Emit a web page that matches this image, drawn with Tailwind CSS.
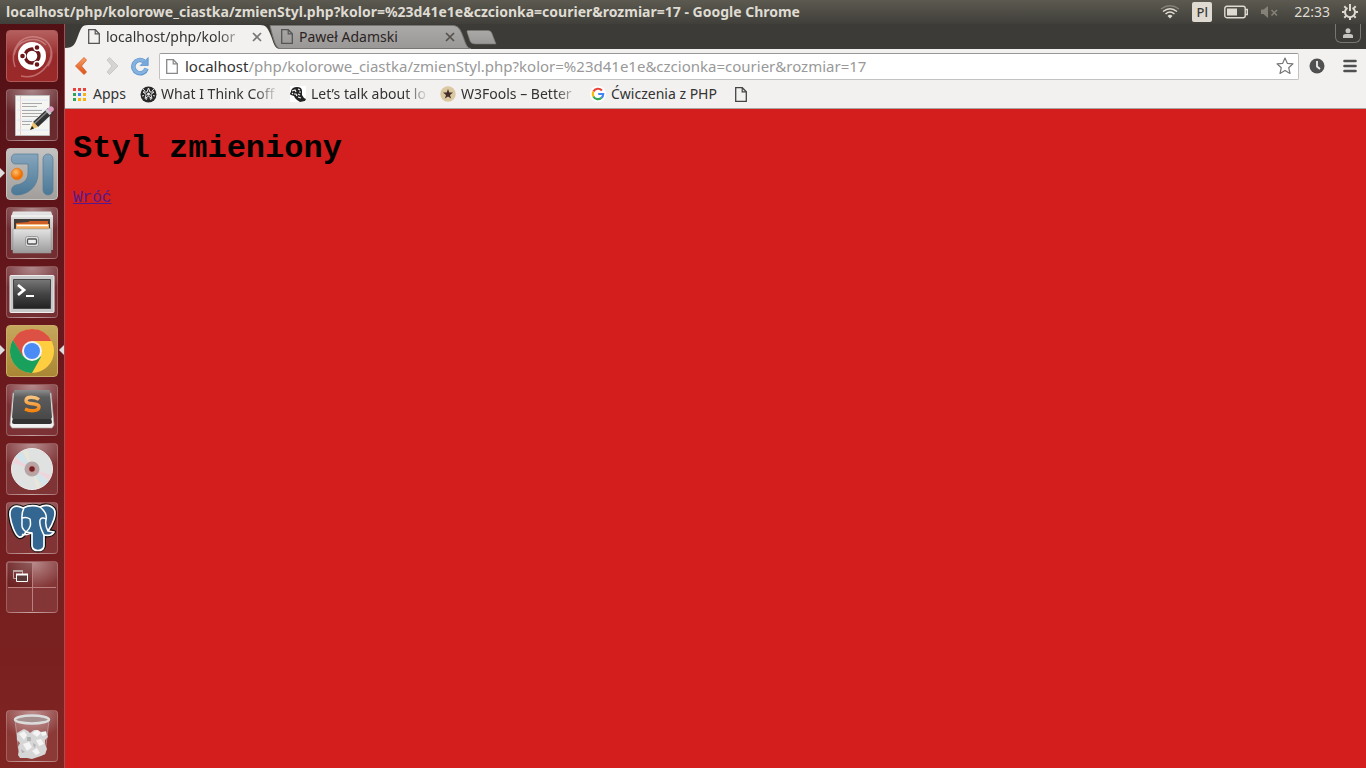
<!DOCTYPE html>
<html lang="pl">
<head>
<meta charset="utf-8">
<meta name="viewport" content="width=device-width, initial-scale=1">
<title>localhost/php/kolorowe_ciastka/zmienStyl.php</title>
<script src="https://cdn.jsdelivr.net/npm/@tailwindcss/browser@4"></script>
</head>
<body class="flex h-screen flex-col overflow-hidden bg-[#3c3b37] font-['Noto_Sans','Open_Sans',sans-serif] text-sm text-[#3a3a3a]">
<svg width="0" height="0" class="absolute" aria-hidden="true">
  <defs>
    <linearGradient id="metal" x1="0" y1="0" x2="0" y2="1"><stop offset="0" stop-color="#e6e6e6"/><stop offset="1" stop-color="#9a9a9a"/></linearGradient>
    <linearGradient id="blue" x1="0" y1="0" x2="0" y2="1"><stop offset="0" stop-color="#86a5bc"/><stop offset="1" stop-color="#4b7896"/></linearGradient>
    <linearGradient id="dark" x1="0" y1="0" x2="0" y2="1"><stop offset="0" stop-color="#777"/><stop offset=".5" stop-color="#444"/><stop offset="1" stop-color="#222"/></linearGradient>
    <linearGradient id="keycap" x1="0" y1="0" x2="0" y2="1"><stop offset="0" stop-color="#8d8d8d"/><stop offset=".25" stop-color="#5c5c5c"/><stop offset="1" stop-color="#484848"/></linearGradient>
    <linearGradient id="orange" x1="0" y1="0" x2="0" y2="1"><stop offset="0" stop-color="#f8c27e"/><stop offset="1" stop-color="#f58410"/></linearGradient>
    <radialGradient id="ball" cx=".4" cy=".35"><stop offset="0" stop-color="#ffc070"/><stop offset="1" stop-color="#f07000"/></radialGradient>
    <linearGradient id="back" x1="0" y1="0" x2="0" y2="1"><stop offset="0" stop-color="#f5a267"/><stop offset="1" stop-color="#dc4f17"/></linearGradient>
    <linearGradient id="tab" x1="0" y1="0" x2="0" y2="1"><stop offset="0" stop-color="#aaa9a7"/><stop offset="1" stop-color="#999896"/></linearGradient>
    <symbol id="page" viewBox="0 0 12 15"><path d="M.7.7h6.600l4 4v9.600H.7z" fill="none" stroke="currentColor" stroke-width="1.300"/><path d="M7.200.7v4.100h4.100" fill="none" stroke="currentColor" stroke-width="1.200"/></symbol>
  </defs>
</svg>

<header class="flex h-6 shrink-0 items-center bg-linear-to-b from-[#5c5a50] to-[#403f3a] pr-2 pl-1.5 text-[#dfdbd2]">
  <h1 class="flex-1 truncate text-[14px] leading-6 font-bold">localhost/php/kolorowe_ciastka/zmienStyl.php?kolor=%23d41e1e&amp;czcionka=courier&amp;rozmiar=17 - Google Chrome</h1>
  <div class="flex items-center">
    <svg class="mr-3 h-4 w-5" viewBox="0 0 20 16" fill="none" stroke="#dfdbd2" stroke-width="1.500"><path d="M1 5Q10-1.500 19 5" stroke="#858176"/><path d="M3 7.500Q10 2 17 7.500M5.500 10Q10 6 14.500 10"/><path d="M7.500 12Q10 9.500 12.500 12L10 14.500z" fill="#dfdbd2" stroke="none"/></svg>
    <span class="mr-3 h-5 w-5 rounded-xs bg-[#dfdbd2] text-center text-[13px] leading-5 font-medium text-[#3c3b37]">Pl</span>
    <svg class="mr-3 h-3.5 w-6" viewBox="0 0 24 14"><rect x=".8" y="1.300" width="20.400" height="11.400" rx="2" fill="none" stroke="#dfdbd2" stroke-width="1.400"/><path d="M3 3.500h10v7H3z" fill="#dfdbd2"/><path d="M21 4.500h2.300v5H21" fill="none" stroke="#dfdbd2" stroke-width="1.400"/></svg>
    <svg class="mr-3.5 h-4 w-5" viewBox="0 0 20 16" fill="#858176"><path d="M1 5.500h2.500L8 2v12l-4.500-4H1z"/><path d="m11.500 6 5.500 5.500m0-5.500-5.500 5.500" stroke="#858176" stroke-width="1.600"/></svg>
    <time class="mr-3 text-[14px] leading-6">22:33</time>
    <svg class="h-4 w-4" viewBox="0 0 16 16" fill="none" stroke="#dfdbd2"><path d="M5.500 3.800A5 5 0 1 0 10.500 3.800" stroke-width="2"/><path d="M8 0v7" stroke-width="2"/><path d="M0 8h2.500m11 0H16M2.300 13.700l1.800-1.800m7.800 0 1.800 1.800M8 13.500V16M2.300 2.300l1.800 1.800m7.800 0 1.800-1.800" stroke-width="2"/></svg>
  </div>
</header>

<div class="flex min-h-0 flex-1">
<nav aria-label="Launcher" class="flex w-[65px] shrink-0 flex-col gap-[7px] border-r border-[#a25055] bg-linear-to-b from-[#521015] via-[#6c1a1e] to-[#802421] px-1.5 pt-1.5 pb-1.5">
  <button aria-label="Dash" class="h-[52px] w-[52px] shrink-0 rounded-sm border border-[#b05a58] bg-linear-to-b from-[#b56060] via-[#96292b] to-[#9c2929]">
    <svg class="h-full w-full" viewBox="0 0 50 50" fill="none"><path d="M8 36C2 18 14 4 29 6s20 17 12 29M14 45C30 49 46 35 44 18M7 24C10 8 29 4 39 14" stroke="#dfa2a0" stroke-opacity=".55" stroke-width="1.500"/><circle cx="25" cy="25" r="14" fill="#fff"/><circle cx="25" cy="25" r="7" stroke="#6b1719" stroke-width="3.400"/><g fill="#6b1719" stroke="#fff" stroke-width="1.400"><circle cx="15.500" cy="25" r="3"/><circle cx="30" cy="16.500" r="3"/><circle cx="30" cy="33.500" r="3"/></g></svg>
  </button>
  <button aria-label="Text Editor" class="h-[52px] w-[52px] shrink-0 rounded-sm border border-white/20 bg-[radial-gradient(ellipse_70%_55%_at_50%_0%,rgba(255,255,255,0.5),rgba(255,255,255,0.1))]">
    <svg class="h-full w-full" viewBox="0 0 50 50"><path d="M8.500 5.500h34v40h-34z" fill="#f5f5f2" stroke="#bbb"/><path d="M13.500 6v39" stroke="#ecc"/><path d="M10 10h31M10 20h31M10 30h31M10 40h31" stroke="#dce8f4"/><path d="M15 13.500h20M15 16.500h15M15 20.500h20M15 23.500h20M15 26.500h16M15 31.500h10M15 34.500h8" stroke="#aaa" stroke-width="1"/><path d="m26 32 15-14 5 5-15 14z" fill="#333"/><path d="m27.500 33.500 15-14" stroke="#888" stroke-width="1.500"/><path d="m39 20 4-3.500c2-1 5 2 3.500 4L43 24z" fill="#dba0c2"/><path d="m38 20.500 2-1.500 4.500 4.500-2 1.500z" fill="#ccc"/><path d="m26 32 5 5-8 3z" fill="#ecc36b"/><path d="m25 36-2 4 4-1.500z" fill="#222"/></svg>
  </button>
  <div class="relative h-[52px] shrink-0">
    <span class="absolute top-5 -left-1.5 border-y-[5px] border-l-[5px] border-y-transparent border-l-[#ddd]"></span>
    <button aria-label="IntelliJ IDEA" class="h-[52px] w-[52px] rounded-sm border border-[#c6c2c0] bg-linear-to-b from-[#c4c3c1] to-[#a19e9b]">
      <svg class="h-full w-full" viewBox="0 0 50 50" fill="url(#blue)" stroke="#547b96" stroke-width=".7"><path d="M8 5h23v19c0 14-10 22-22 22-6 0-6-9 0-10 7-1 12-5 12-12v-9H8c-5 0-5-10 0-10z"/><rect x="36" y="5" width="10" height="41" rx="5"/><circle cx="10" cy="25" r="5.800" fill="url(#ball)" stroke="#e87b18"/></svg>
    </button>
  </div>
  <button aria-label="Files" class="h-[52px] w-[52px] shrink-0 rounded-sm border border-white/20 bg-[radial-gradient(ellipse_70%_55%_at_50%_0%,rgba(255,255,255,0.5),rgba(255,255,255,0.1))]">
    <svg class="h-full w-full" viewBox="0 0 50 50"><path d="M6 3.500h38l2 5.500v33H4V9z" fill="url(#metal)"/><path d="M4 8h42" stroke="#fff"/><path d="M7 11h36v11H7z" fill="#433c38"/><path d="M9 15l12-1 2-1h18v10H9z" fill="#cf5f26"/><path d="M9 16h33v7H9z" fill="#f4aa5c"/><path d="M10 17.500h31" stroke="#fff" stroke-width="1.500"/><path d="M7 21h34l3-1v25H6V21z" fill="url(#metal)" stroke="#999" stroke-width=".6"/><rect x="18.500" y="28.500" width="13" height="10" rx="2" fill="#ddd" stroke="#999"/><rect x="20.500" y="31" width="9" height="5" rx="1" fill="#eee" stroke="#555" stroke-width="1.300"/></svg>
  </button>
  <button aria-label="Terminal" class="h-[52px] w-[52px] shrink-0 rounded-sm border border-white/20 bg-[radial-gradient(ellipse_70%_55%_at_50%_0%,rgba(255,255,255,0.5),rgba(255,255,255,0.1))]">
    <svg class="h-full w-full" viewBox="0 0 50 50"><rect x="3" y="8.500" width="44" height="37" rx="1" fill="#c8c8c8" stroke="#eee"/><path d="M6.500 12.500h37v29h-37z" fill="url(#dark)" stroke="#444"/><path d="m11 18 6 5-6 5" fill="none" stroke="#fff" stroke-width="2.800"/><path d="M19 29h8" stroke="#fff" stroke-width="2"/></svg>
  </button>
  <div class="relative h-[52px] shrink-0">
    <span class="absolute top-5 -left-1.5 border-y-[5px] border-l-[5px] border-y-transparent border-l-[#ddd]"></span>
    <button aria-label="Google Chrome" class="h-[52px] w-[52px] rounded-sm border border-[#c9ad68] bg-linear-to-b from-[#c5a75d] to-[#a98733]">
      <svg class="h-full w-full" viewBox="0 0 50 50"><circle cx="25" cy="25" r="22" fill="#ffcd40"/><path d="M25 25 15.500 30.500 5.950 14A22 22 0 0 1 44.500 15H25z" fill="#dd5144"/><path d="M5.950 14A22 22 0 0 0 25 47L34 31 25 25 16 30.500z" fill="#18a05c"/><circle cx="25" cy="25" r="10" fill="#f3f3f3"/><circle cx="25" cy="25" r="8" fill="#4b8bf5"/></svg>
    </button>
    <span class="absolute top-5 -right-1.5 border-y-[5px] border-r-[5px] border-y-transparent border-r-[#ddd]"></span>
  </div>
  <button aria-label="Sublime Text" class="h-[52px] w-[52px] shrink-0 rounded-sm border border-white/20 bg-[radial-gradient(ellipse_70%_55%_at_50%_0%,rgba(255,255,255,0.5),rgba(255,255,255,0.1))]">
    <svg class="h-full w-full" viewBox="0 0 50 50"><path d="M6 8h38l3 32-2 3H5l-2-3z" fill="#f2f2f2" stroke="#aaa" stroke-width=".7"/><path d="M6 33h38l1 4q0 2-2 2H7q-2 0-2-2z" fill="#333"/><path d="M9 5h32q2 0 2 1l2 26q0 2-2 2H7q-2 0-2-2L7 6q0-1 2-1z" fill="url(#keycap)"/><path d="M32 14.500c-4-3-13-3.500-13 1 0 5 13 1.500 13 6.500 0 4.500-9 4.500-14 2" fill="none" stroke="url(#orange)" stroke-width="3.400"/></svg>
  </button>
  <button aria-label="Disc" class="h-[52px] w-[52px] shrink-0 rounded-sm border border-white/20 bg-[radial-gradient(ellipse_70%_55%_at_50%_0%,rgba(255,255,255,0.5),rgba(255,255,255,0.1))]">
    <svg class="h-full w-full" viewBox="0 0 50 50"><circle cx="25" cy="25" r="20.500" fill="#e0e1e1" stroke="#eee"/><path d="M25 25 9 12l5-4zM25 25l16 13-5 4z" fill="#d2e5ec"/><path d="M25 25 6 19l2-5zM25 25l19 6-2 5z" fill="#eed5dd"/><path d="m25 25-9-17 5-2zM25 25l9 17-5 2z" fill="#e6e6da"/><circle cx="25" cy="25" r="7.500" fill="#b7a5a5"/><circle cx="25" cy="25" r="3.500" fill="#742126" stroke="#c49a9a" stroke-width="1.500"/></svg>
  </button>
  <button aria-label="pgAdmin" class="h-[52px] w-[52px] shrink-0 rounded-sm border border-white/20 bg-[radial-gradient(ellipse_70%_55%_at_50%_0%,rgba(255,255,255,0.5),rgba(255,255,255,0.1))]">
    <svg class="h-full w-full" viewBox="0 0 50 50" stroke-linejoin="round" fill="#336791"><path d="M16 5C8 1 2 4 3 13c1 8 5 19 9 21 3 1 5-2 7-5l6 1v13c1 6 11 6 12 0V32c4 1 8 0 10-3l-6-1c5-7 9-17 6-22-4-5-11-4-14-2-6-2-11-2-17 1z" stroke="#111" stroke-width="4"/><path d="M16 5C8 1 2 4 3 13c1 8 5 19 9 21 3 1 5-2 7-5l6 1v13c1 6 11 6 12 0V32c4 1 8 0 10-3l-6-1c5-7 9-17 6-22-4-5-11-4-14-2-6-2-11-2-17 1z" stroke="#fff" stroke-width="1.700"/><path d="M17 5c-3 5-2 9-2 13 0 5-1 7 4 11 5-4 5-8 4-13-3-2-5-2-8-1M33 4c5 4 7 9 6 13-1 4 0 7 2 11m-2-12c-3-2-5-1-6 1-1 6 2 11 4 15M15 31c3 2 6 0 10-1" fill="none" stroke="#fff" stroke-width="1.500"/></svg>
  </button>
  <button aria-label="Workspace Switcher" class="h-[52px] w-[52px] shrink-0 rounded-sm border border-white/20 bg-[radial-gradient(ellipse_70%_55%_at_50%_0%,rgba(255,255,255,0.5),rgba(255,255,255,0.1))]">
    <svg class="h-full w-full" viewBox="0 0 50 50"><path d="M1 1h24v24H1z" fill="#400" fill-opacity=".35"/><path d="M25.500 1v48M1 25.500h48" stroke="#bd8080"/><path d="M6.500 8.500h9v8h-9z" fill="none" stroke="#bba6a6"/><path d="M6 9h10" stroke="#bba6a6" stroke-width="2"/><path d="M9.500 12.500h11v7h-11z" fill="#5d3a3a" stroke="#fff"/><path d="M9 12.500h12" stroke="#fff" stroke-width="2"/></svg>
  </button>
  <button aria-label="Trash" class="mt-auto h-[52px] w-[52px] shrink-0 rounded-sm border border-white/20 bg-[radial-gradient(ellipse_70%_55%_at_50%_0%,rgba(255,255,255,0.5),rgba(255,255,255,0.1))]">
    <svg class="h-full w-full" viewBox="0 0 50 50"><path d="m8 9 4 34q13 5 26 0l4-34z" fill="#fff" fill-opacity=".15" stroke="#ccc" stroke-opacity=".5"/><path d="m10 22 5-3 2-1 4 2 2 2 4-3 4 0 3 2 5-1 2 6-3 3 0 4 2 5-2 5-4 2-3 1-6 2-5-1-7 0-2-3 1-4-1-4 2-4-3-3z" fill="#d6d6d6"/><path d="m12 23 5-3 3 4-3 5zM25 22l5-3 4 3-4 4zM16 33l6-2 3 5-5 4zM29 29l5-1 3 5-5 2zM25 40l5-3 3 5-4 2zM34 21l5 0 0 3-4 1z" fill="#f4f4f4"/><path d="m20 26 4 0 0 4-4 0zM26 32l3 2-2 3zM14 38l4 3-3 1z" fill="#b2b2b2"/><ellipse cx="25" cy="8.500" rx="17" ry="4" fill="#a58f8f" stroke="#dcdcdc" stroke-width="2.500"/></svg>
  </button>
</nav>

<div class="flex min-w-0 flex-1 flex-col">
  <div class="flex h-[25px] shrink-0 items-start pl-2">
    <div class="relative z-10 flex h-[25px] w-[203px] items-center pl-[15px] text-[#333]">
      <svg class="absolute inset-0 h-full w-full overflow-visible" viewBox="0 0 203 25" preserveAspectRatio="none"><path d="M-8 25v-1C1 24 2 20 5 12 8 4 9 1 15 1H187c6 0 8 3 11 11 3 8 4 13 9 13z" fill="#f2f1f0"/></svg>
      <svg class="relative h-[15px] w-3 text-[#555]"><use href="#page"/></svg>
      <a href="#" class="relative ml-1.5 w-[140px] whitespace-nowrap text-[14px] leading-6 [mask-image:linear-gradient(to_right,black_80%,transparent)]">localhost/php/kolor</a>
      <button aria-label="Close tab" class="relative ml-1.5"><svg class="h-2.5 w-2.5" viewBox="0 0 10 10" stroke="#777" stroke-width="1.700"><path d="m1 1 8 8m0-8L1 9"/></svg></button>
    </div>
    <div class="relative flex h-[25px] w-[193px] items-center pl-[5px] text-[#2c2424]">
      <svg class="absolute inset-0 h-full w-full overflow-visible" viewBox="0 0 193 25" preserveAspectRatio="none"><path d="M-6 1.500H176c6 0 8 3 11 11 3 8 4 12 8 12H4C0 24-2 18-6 1.500z" fill="url(#tab)" stroke="#777672"/></svg>
      <svg class="relative h-[15px] w-3 text-[#555]"><use href="#page"/></svg>
      <a href="#" class="relative ml-1.5 w-[140px] text-[14px] leading-6">Paweł Adamski</a>
      <button aria-label="Close tab" class="relative ml-1.5"><svg class="h-2.5 w-2.5" viewBox="0 0 10 10" stroke="#55514c" stroke-width="1.700"><path d="m1 1 8 8m0-8L1 9"/></svg></button>
    </div>
    <button aria-label="New tab" class="mt-1.5 -ml-2"><svg class="block h-4 w-9 overflow-visible" viewBox="0 0 36 16"><path d="M7 .5h20q3 0 4 3l4 10.500H14q-4 0-5-3L6 2Q5.500.5 7 .5z" fill="url(#tab)" stroke="#777672" stroke-width=".6"/></svg></button>
    <button aria-label="Profile" class="mr-[5px] ml-auto flex h-[19px] w-[26px] items-center justify-center rounded-b-md border border-t-0 border-[#777672]"><svg class="h-[10px] w-[10px]" viewBox="0 0 10 10" fill="#c5c4c0"><circle cx="5" cy="2.700" r="2.500"/><path d="M0 10V8q0-2 3-2h4q3 0 3 2v2z"/></svg></button>
  </div>

  <div class="flex h-[34px] shrink-0 items-center bg-[#f2f1f0] pr-[9px] pl-2">
    <button aria-label="Back" class="mr-4"><svg class="block h-5 w-4" viewBox="0 0 16 20"><path d="M11 1.500 2.500 10l8.500 8.500 2.500-2.500-5-6 5-6z" fill="url(#back)" stroke="#d95a1d" stroke-width=".8"/></svg></button>
    <button aria-label="Forward" class="mr-2.5"><svg class="block h-5 w-4" viewBox="0 0 16 20"><path d="M4.500 1.500 13 10l-8.500 8.500L2 16l5-6-5-6z" fill="#d6d4d2" stroke="#c4c2c0" stroke-width=".8"/></svg></button>
    <button aria-label="Reload" class="mr-2.5"><svg class="block h-5 w-[18px]" viewBox="0 0 18 20"><path d="M15.500 12.500A6.700 6.700 0 1 1 13 5.200" fill="none" stroke="#5f97cf" stroke-width="4.500"/><path d="M15.300 12.500A6.600 6.600 0 1 1 13 5.200" fill="none" stroke="#85b2df" stroke-width="3"/><path d="M17.200 1.500v8h-8z" fill="#76a8db" stroke="#5f97cf" stroke-width=".8"/></svg></button>
    <div class="flex h-[27px] min-w-0 flex-1 items-center rounded-xs border border-[#c3c2c0] border-t-[#989796] bg-white pr-1 pl-1.5">
      <svg class="h-[15px] w-3 shrink-0 text-[#888]"><use href="#page"/></svg>
      <div role="textbox" aria-label="Address" contenteditable="true" class="ml-[7px] min-w-0 flex-1 overflow-hidden whitespace-nowrap text-[15px] leading-6 text-[#999]"><span class="text-[#333]">localhost</span>/php/kolorowe_ciastka/zmienStyl.php?kolor=%23d41e1e&amp;czcionka=courier&amp;rozmiar=17</div>
      <button aria-label="Bookmark this page"><svg class="block h-[18px] w-[18px]" viewBox="0 0 18 18"><path d="m9 1 2.300 5.300 5.700.5-4.300 3.900L14 16.500l-5-3-5 3 1.300-5.800L1 6.800l5.700-.5z" fill="#fff" stroke="#777" stroke-width="1.200" stroke-linejoin="round"/></svg></button>
    </div>
    <button aria-label="History clock" class="ml-2.5"><svg class="block h-4 w-4" viewBox="0 0 16 16"><circle cx="8" cy="8" r="7.500" fill="#505050"/><path d="M8 3v5.500l3 2.500" fill="none" stroke="#eee" stroke-width="1.800"/></svg></button>
    <button aria-label="Menu" class="ml-[18px]"><svg class="block h-4 w-[14px]" viewBox="0 0 14 16" stroke="#505050" stroke-width="2.600" stroke-linecap="round"><path d="M1.500 3h11M1.500 8h11M1.500 13h11"/></svg></button>
  </div>

  <nav aria-label="Bookmarks" class="flex h-[26px] shrink-0 items-start border-b border-[#a8a5a2] bg-[#f2f1f0] pl-2 text-[14px] leading-[22px] whitespace-nowrap text-[#333]">
    <a href="#" class="flex h-[22px] w-[67px] items-center gap-[7px]"><svg class="h-[13px] w-[13px]" viewBox="0 0 13 13"><path d="M0 0h3v3H0zM5 0h3v3H5zM10 0h3v3h-3z" fill="#ed3f3b"/><path d="M0 5h3v3H0zM0 10h3v3H0z" fill="#2ba55a"/><path d="M5 5h3v3H5z" fill="#3c86f0"/><path d="M10 5h3v3h-3zM5 10h3v3H5zM10 10h3v3h-3z" fill="#f7b211"/></svg>Apps</a>
    <a href="#" class="flex h-[22px] w-[150px] items-center gap-1"><svg class="h-[17px] w-[17px] shrink-0" viewBox="0 0 17 17"><circle cx="8.500" cy="8.500" r="8" fill="#292929"/><path d="m8.500 2 1.500 4h4l-3.200 2.500 1.200 4-3.500-2.300L5 12.500l1.200-4L3 6h4z" fill="none" stroke="#eee"/><path d="m3 3 2 2m9-2-2 2M2 10l2-.5m11 .5-2-.5M6 14l1-2m4 2-1-2" stroke="#ddd"/><circle cx="8.500" cy="8" r="1.500" fill="#eee"/></svg><span class="w-[118px] [mask-image:linear-gradient(to_right,black_80%,transparent)]">What I Think Coff</span></a>
    <a href="#" class="flex h-[22px] w-[150px] items-center gap-1"><svg class="h-4 w-4 shrink-0" viewBox="0 0 16 16"><path d="M0 0h16v16H0z" fill="#fff"/><path d="M1 5q1-4 6-4 5 0 5 4l0 4 2 3 2 1-1 2-5 1-3-2-2-2-1-2-3-1q-2-1 0-3z" fill="#222"/><path d="m2 5 3-1 1 2m2-3 2 1M4 8l2 0 1 2m2-4 2 0m-3 2 2 1m-2 2 3 1M2 7l1 1" fill="none" stroke="#f4f4f4" stroke-width="1.200"/></svg><span class="ml-px w-[118px] [mask-image:linear-gradient(to_right,black_80%,transparent)]">Let’s talk about lo</span></a>
    <a href="#" class="flex h-[22px] w-[150px] items-center gap-[5px]"><svg class="h-4 w-4 shrink-0" viewBox="0 0 16 16"><circle cx="8" cy="8" r="7.700" fill="#dbc8a0"/><path d="m8 3 1.300 3.600h3.700l-3 2.300 1.100 3.700L8 10.400l-3.100 2.200L6 8.900 3 6.600h3.700z" fill="#442e29"/></svg><span class="w-[118px] [mask-image:linear-gradient(to_right,black_80%,transparent)]">W3Fools – Better</span></a>
    <a href="#" class="flex h-[22px] w-[145px] items-center gap-[5px]"><svg class="h-4 w-4 shrink-0" viewBox="0 0 16 16"><circle cx="8" cy="8" r="8" fill="#fff"/><g fill="none" stroke-width="2.200"><path d="M11.900 4.500A5.200 5.200 0 0 0 3.400 5.500" stroke="#ea4335"/><path d="M3.400 5.500a5.200 5.200 0 0 0 0 5" stroke="#fbbc05"/><path d="M3.400 10.500a5.200 5.200 0 0 0 8 1.400" stroke="#34a853"/><path d="M11.400 11.900A5 5 0 0 0 13.200 8H8.200" stroke="#4285f4"/></g></svg>Ćwiczenia z PHP</a>
    <a href="#" aria-label="Untitled bookmark" class="flex h-[22px] items-center"><svg class="h-[15px] w-3 text-[#444]"><use href="#page"/></svg></a>
  </nav>

  <main class="flex-1 bg-[#d41e1e] px-2 pt-[22px] font-['Liberation_Mono',monospace] text-black">
    <h2 class="text-[32px] leading-9 font-bold">Styl zmieniony</h2>
    <a href="#" class="mt-[21px] inline-block text-base leading-5 text-[#551a8b] underline">Wróć</a>
  </main>
</div>
</div>
</body>
</html>
